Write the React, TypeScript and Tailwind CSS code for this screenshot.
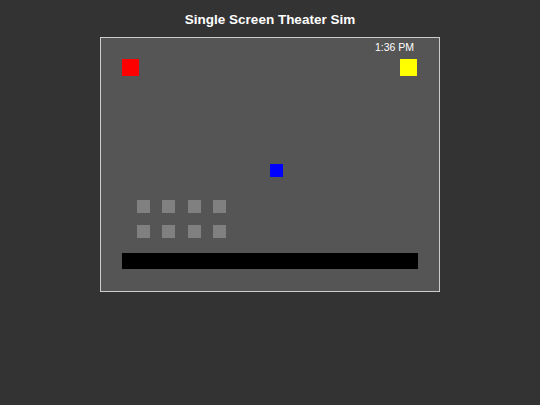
const SEAT_COLS = [37, 62, 88, 113];
const SEAT_ROWS = [163, 188];

function Seat({ x, y }: { x: number; y: number }) {
  return (
    <div
      className="absolute w-[13px] h-[13px] bg-[#808080]"
      style={{ left: x, top: y }}
    />
  );
}

export default function App() {
  return (
    <div
      className="w-[540px] h-[405px] bg-[#333333] flex flex-col items-center"
      style={{ fontFamily: '"Liberation Sans", Arial, sans-serif' }}
    >
      <h1 className="mt-[11px] h-[18px] leading-[18px] text-[13.5px] font-bold text-white">
        Single Screen Theater Sim
      </h1>
      <div className="mt-[8px] relative w-[340px] h-[255px] border border-[#cccccc] bg-[#555555]">
        <span className="absolute right-[25px] top-[3px] text-[10.5px] leading-[13px] text-white">
          1:36 PM
        </span>
        {/* entrance / exit */}
        <div className="absolute left-[21px] top-[21px] w-[17px] h-[17px] bg-[#ff0000]" />
        <div className="absolute left-[299px] top-[21px] w-[17px] h-[17px] bg-[#ffff00]" />
        {/* patron */}
        <div className="absolute left-[169px] top-[126px] w-[13px] h-[13px] bg-[#0000ff]" />
        {SEAT_ROWS.map((y) =>
          SEAT_COLS.map((x) => <Seat key={`${x}-${y}`} x={x - 1} y={y - 1} />)
        )}
        {/* screen */}
        <div className="absolute left-[21px] top-[215px] w-[296px] h-[16px] bg-black" />
      </div>
    </div>
  );
}
